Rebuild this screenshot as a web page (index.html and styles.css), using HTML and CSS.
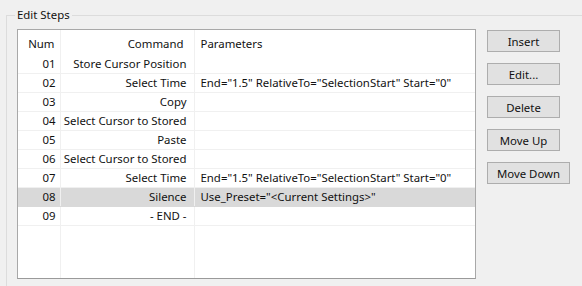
FILE: index.html
```html
<!DOCTYPE html>
<html lang="en">

<head>
    <meta charset="UTF-8">
    <title>Edit Steps</title>
    <link rel="stylesheet" href="styles.css">
</head>

<body>
    <!-- Edit Steps group -->
    <div class="group">
        <span class="group-title">Edit Steps</span>

        <div class="group-body">
            <!-- Step list -->
            <div class="list">
                <table class="steps">
                    <thead>
                        <tr>
                            <th class="col-num">Num</th>
                            <th class="col-cmd">Command</th>
                            <th class="col-par">Parameters</th>
                        </tr>
                    </thead>
                    <tbody>
                        <tr><td class="col-num">01</td><td class="col-cmd">Store Cursor Position</td><td class="col-par"></td></tr>
                        <tr><td class="col-num">02</td><td class="col-cmd">Select Time</td><td class="col-par">End="1.5" RelativeTo="SelectionStart" Start="0"</td></tr>
                        <tr><td class="col-num">03</td><td class="col-cmd">Copy</td><td class="col-par"></td></tr>
                        <tr><td class="col-num">04</td><td class="col-cmd">Select Cursor to Stored</td><td class="col-par"></td></tr>
                        <tr><td class="col-num">05</td><td class="col-cmd">Paste</td><td class="col-par"></td></tr>
                        <tr><td class="col-num">06</td><td class="col-cmd">Select Cursor to Stored</td><td class="col-par"></td></tr>
                        <tr><td class="col-num">07</td><td class="col-cmd">Select Time</td><td class="col-par">End="1.5" RelativeTo="SelectionStart" Start="0"</td></tr>
                        <tr class="selected"><td class="col-num">08</td><td class="col-cmd">Silence</td><td class="col-par">Use_Preset="&lt;Current Settings&gt;"</td></tr>
                        <tr><td class="col-num">09</td><td class="col-cmd">- END -</td><td class="col-par"></td></tr>
                        <tr class="filler"><td></td><td></td><td></td></tr>
                    </tbody>
                </table>
            </div>

            <!-- Buttons -->
            <div class="actions">
                <button class="btn">Insert</button>
                <button class="btn">Edit...</button>
                <button class="btn">Delete</button>
                <button class="btn">Move Up</button>
                <button class="btn btn-wide">Move Down</button>
            </div>
        </div>
    </div>
</body>

</html>
```

FILE: styles.css
```css
* {
    box-sizing: border-box;
}

html,
body {
    overflow: hidden;
}

body {
    margin: 0;
    background: #f0f0f0;
    font-family: "Noto Sans", "Open Sans", sans-serif;
    font-size: 11.4px;
    color: #111;
    width: 582px;
    height: 286px;
}

/* Group box */
.group {
    position: relative;
    margin: 15px 0 0 6px;
    width: 576px;
    height: 271px;
    border-top: 1px solid #dcdcdc;
    border-left: 1px solid #dcdcdc;
    padding: 13px 0 0 10px;
}

.group-title {
    position: absolute;
    top: -9px;
    left: 8px;
    padding: 0 2px;
    background: #f0f0f0;
    line-height: 16px;
}

.group-body {
    display: flex;
    align-items: flex-start;
    gap: 11px;
}

/* List view */
.list {
    width: 459px;
    height: 250px;
    background: #fff;
    border: 1px solid #a8a8a8;
    border-bottom-color: #9a9a9a;
    display: flex;
}

.steps {
    width: 100%;
    height: 100%;
    border-collapse: collapse;
    table-layout: fixed;
}

.steps th,
.steps td {
    padding: 0;
    font-weight: normal;
    white-space: nowrap;
    overflow: hidden;
    border-right: 1px solid #f0f0f0;
}

.steps th {
    height: 24px;
    padding-top: 2px;
}

.steps td {
    height: 19px;
    border-bottom: 1px solid #f0f0f0;
}

.steps .col-num {
    width: 42px;
    text-align: right;
    padding-right: 4px;
}

.steps .col-cmd {
    width: 134px;
    text-align: right;
    padding-right: 7px;
}

.steps th.col-cmd {
    padding-right: 10px;
}

.steps th.col-num {
    padding-right: 5px;
}

.steps .col-par {
    text-align: left;
    padding-left: 6px;
    border-right: none;
}

.steps .selected td {
    background: #d9d9d9;
    border-bottom-color: #d9d9d9;
}

.steps .filler td {
    height: auto;
    border-bottom: none;
}

.steps .filler td:last-child {
    border-right: none;
}

/* Buttons */
.actions {
    display: flex;
    flex-direction: column;
    gap: 11px;
    margin-top: 1px;
}

.btn {
    width: 73px;
    height: 22px;
    padding: 0;
    font: inherit;
    color: #111;
    background: #e1e1e1;
    border: 1px solid #adadad;
}

.btn-wide {
    width: 83px;
}
```
